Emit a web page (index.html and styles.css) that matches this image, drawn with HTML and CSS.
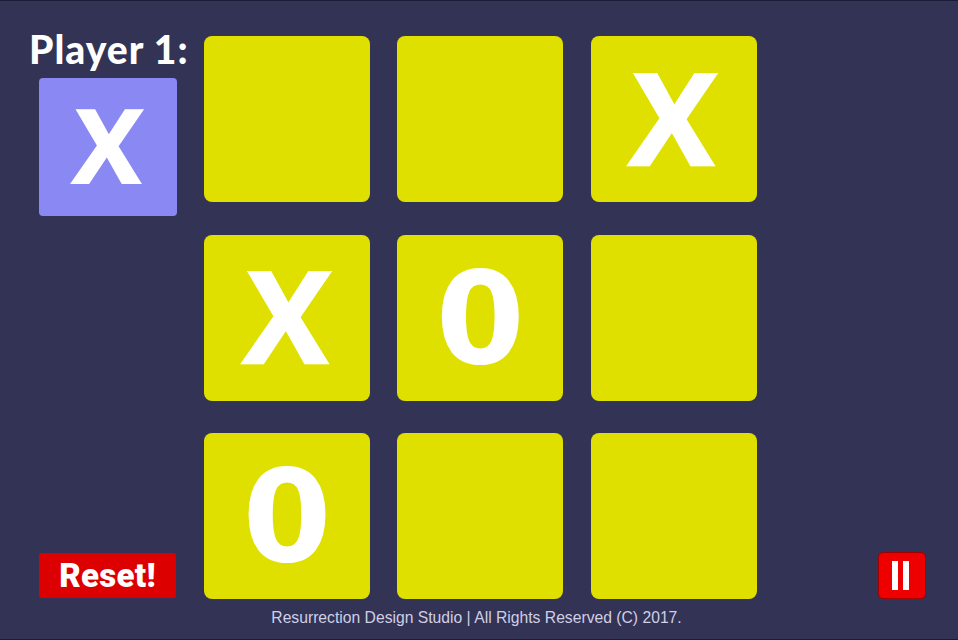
FILE: index.html
```html
<!DOCTYPE html>
<html lang="en">
<head>
    <meta charset="UTF-8">
    <title>Tic Tac Toe</title>
    <link rel="stylesheet" href="styles.css">
</head>
<body>
    <div class="game">
        <div class="side-left">
            <div class="player">
                <h2 class="player-label">Player 1:</h2>
                <div class="player-mark"><span class="mark-x">X</span></div>
            </div>
            <button class="reset-btn">Reset!</button>
        </div>

        <div class="board">
            <div class="cell"></div>
            <div class="cell"></div>
            <div class="cell"><span class="mark-x">X</span></div>
            <div class="cell"><span class="mark-x">X</span></div>
            <div class="cell"><span class="mark-o">0</span></div>
            <div class="cell"></div>
            <div class="cell"><span class="mark-o">0</span></div>
            <div class="cell"></div>
            <div class="cell"></div>
        </div>

        <div class="side-right">
            <button class="pause-btn" aria-label="Pause"><span></span><span></span></button>
        </div>
    </div>

    <footer class="footer">Resurrection Design Studio | All Rights Reserved (C) 2017.</footer>
</body>
</html>
```

FILE: styles.css
```css
* {
    box-sizing: border-box;
}

html, body {
    height: 100%;
    margin: 0;
}

body {
    display: flex;
    flex-direction: column;
    background-color: #333355;
    border-top: 1px solid #1c1c38;
    border-bottom: 1px solid #1c1c38;
    font-family: "Liberation Sans", Arial, sans-serif;
    color: #fff;
    overflow: hidden;
}

.game {
    display: flex;
    padding-top: 35px;
}

.side-left {
    width: 204px;
    height: 563px;
    display: flex;
    flex-direction: column;
    justify-content: space-between;
    align-items: flex-start;
    padding-left: 39px;
}

.player-label {
    margin: -10px 0 0 -10px;
    font-family: Lato, sans-serif;
    font-size: 39px;
    line-height: 46px;
    font-weight: 900;
    letter-spacing: 1px;
    white-space: nowrap;
}

.player-mark {
    width: 138px;
    height: 138px;
    margin-top: 6px;
    background-color: #8a88f2;
    border-radius: 4px;
    display: flex;
    align-items: center;
    justify-content: center;
    font-size: 102px;
    line-height: 1;
}

.reset-btn {
    width: 137px;
    height: 45px;
    padding: 0;
    border: none;
    border-radius: 2px;
    background-color: #dd0000;
    color: #fff;
    font-family: Roboto, sans-serif;
    font-size: 33px;
    font-weight: 900;
    letter-spacing: 0.3px;
    position: relative;
    top: -1px;
}

.board {
    display: grid;
    grid-template-columns: repeat(3, 166px);
    grid-template-rows: repeat(3, 166px);
    gap: 32.5px 27.3px;
}

.cell {
    background-color: #dfdf00;
    border-radius: 8px;
    display: flex;
    align-items: center;
    justify-content: center;
    font-size: 127px;
    line-height: 1;
}

.mark-x {
    display: block;
    font-family: "Open Sans", sans-serif;
    font-weight: 700;
    -webkit-text-stroke: 0.02em #fff;
    transform: translateY(-3%) skewX(-3deg);
}

.mark-o {
    display: block;
    font-family: "DejaVu Sans", sans-serif;
    font-weight: 700;
    font-size: 128px;
    transform: translateY(1px);
}

.side-right {
    flex: 1;
    display: flex;
    align-items: flex-end;
    justify-content: flex-end;
    padding-right: 32px;
}

.pause-btn {
    width: 48px;
    height: 47px;
    padding: 0 3px 0 0;
    border: 1px solid #a00000;
    border-radius: 5px;
    background-color: #ee0000;
    display: flex;
    align-items: center;
    justify-content: center;
    gap: 5px;
}

.pause-btn span {
    width: 6px;
    height: 29px;
    background-color: #fff;
}

.footer {
    margin-top: 10px;
    padding-right: 5px;
    text-align: center;
    font-size: 15.7px;
    color: #cfcfe6;
    line-height: 18px;
}
```
